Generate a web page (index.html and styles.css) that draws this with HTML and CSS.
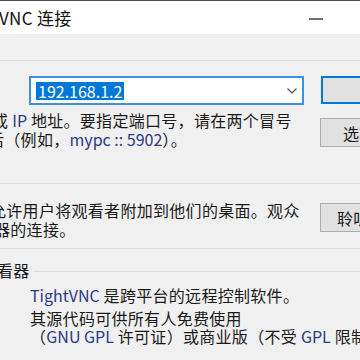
FILE: index.html
```html
<!DOCTYPE html>
<html lang="zh-CN">
<head>
<meta charset="utf-8">
<title>新建 TightVNC 连接</title>
<link rel="stylesheet" href="styles.css">
</head>
<body>
<div class="window">
  <header class="titlebar">
    <span class="title">VNC 连接</span>
    <span class="min"></span>
  </header>
  <main class="client">
    <section class="group g-conn">
      <div class="host-row">
        <div class="combo">
          <span class="sel">192.168.1.2</span>
          <svg class="chev" width="10" height="6" viewBox="0 0 10 6"><polyline points="0.5,0.5 5,5 9.5,0.5" fill="none" stroke="#5a5a5a" stroke-width="1.3"/></svg>
        </div>
        <button class="btn btn-default" type="button"></button>
      </div>
      <div class="desc-row">
        <div class="desc">
          <div class="ln l1">或 <span class="lat">IP</span> 地址。要指定端口号，请在两个冒号</div>
          <div class="ln l2">后（例如，<span class="lat">mypc :: 5902</span>）。</div>
        </div>
        <button class="btn btn-opt" type="button">选项...</button>
      </div>
    </section>
    <section class="group g-listen">
      <div class="desc-row">
        <div class="desc">
          <div class="ln m1">允许用户将观看者附加到他们的桌面。观众</div>
          <div class="ln m2">器的连接。</div>
        </div>
        <button class="btn btn-listen" type="button">聆听模式</button>
      </div>
    </section>
    <section class="group g-about">
      <div class="about-head">
        <span class="head-text">看器</span>
        <span class="head-line"></span>
      </div>
      <div class="about-body">
        <p class="about-p a1"><span class="lat">TightVNC</span> 是跨平台的远程控制软件。</p>
        <p class="about-p a2">其源代码可供所有人免费使用<br>（<span class="lat">GNU GPL</span> 许可证）或商业版（不受 <span class="lat">GPL</span> 限制）</p>
      </div>
    </section>
  </main>
</div>
</body>
</html>
```
FILE: styles.css
```css
* { box-sizing: border-box; }
html, body { margin: 0; padding: 0; }
body {
  width: 360px;
  height: 360px;
  overflow: hidden;
  background: #f0f0f0;
  font-family: "Noto Sans CJK SC", "Noto Sans", sans-serif;
  font-size: 16px;
  letter-spacing: 0.3px;
  color: #1a1a1a;
}
.window {
  width: 360px;
  height: 360px;
  display: flex;
  flex-direction: column;
}
.titlebar {
  flex: 0 0 34px;
  height: 34px;
  background: #fff;
  border-top: 1px solid #4d4d4d;
  display: flex;
  align-items: center;
  justify-content: space-between;
}
.title {
  margin-left: -1px;
  font-size: 17px;
  line-height: 20px;
  color: #111;
}
.min {
  width: 14px;
  height: 2px;
  margin-top: 2px;
  margin-right: 37px;
  background: #707070;
}
.client {
  flex: 1;
  background: #f0f0f0;
}
.g-conn {
  margin-top: 26px;
  border-top: 1px solid #dcdcdc;
}
.host-row {
  display: flex;
  padding-top: 15px;
}
.combo {
  flex: 0 0 275px;
  margin-left: 29px;
  width: 275px;
  height: 29px;
  border: 2px solid #3e8fde;
  background: #fff;
  display: flex;
  align-items: center;
}
.sel {
  margin-left: 5px;
  padding: 0 2px;
  background: #0078d7;
  color: #fff;
  line-height: 18px;
  font-size: 16px;
  letter-spacing: 0;
}
.chev {
  margin-left: auto;
  margin-right: 5px;
}
.btn {
  font-family: inherit;
  font-size: 16px;
  letter-spacing: 0.3px;
  color: #1a1a1a;
  background: #e1e1e1;
  border: 1px solid #adadad;
  text-align: left;
  white-space: nowrap;
  overflow: hidden;
  flex: 0 0 80px;
  width: 80px;
  height: 29px;
  padding: 0;
  margin: 0;
}
.btn-default {
  margin-left: 17px;
  height: 28px;
  border: 2px solid #0078d7;
}
.desc-row {
  display: flex;
}
.g-conn .desc-row {
  margin-top: 6px;
}
.desc {
  flex: 0 0 320px;
  width: 320px;
}
.ln {
  white-space: nowrap;
  line-height: 19px;
}
.l1 { margin-left: -8px; }
.l2 { margin-left: -12px; }
.m1 { margin-left: -10px; }
.m2 { margin-left: -6px; }
.btn-opt {
  margin-top: 7px;
  padding-left: 22px;
}
.g-listen {
  margin-top: 34px;
  border-top: 1px solid #dcdcdc;
  border-bottom: 1px solid #dcdcdc;
  padding: 17px 0 9px;
}
.btn-listen {
  margin-top: 2px;
  padding-left: 16px;
}
.lat {
  color: #2b3a86;
  letter-spacing: 0;
}
.g-about {
  padding-top: 12px;
}
.about-head {
  display: flex;
  align-items: center;
  height: 19px;
}
.head-text {
  margin-left: -3px;
  line-height: 19px;
  white-space: nowrap;
}
.head-line {
  flex: 1;
  height: 1px;
  margin-left: 3px;
  margin-top: 2px;
  background: #dcdcdc;
}
.about-body {
  margin-left: 30px;
  white-space: nowrap;
}
.about-p {
  margin: 0;
  line-height: 18px;
}
.about-p.a1 { margin-top: 6px; }
.about-p.a2 { margin-top: 5px; }
```
